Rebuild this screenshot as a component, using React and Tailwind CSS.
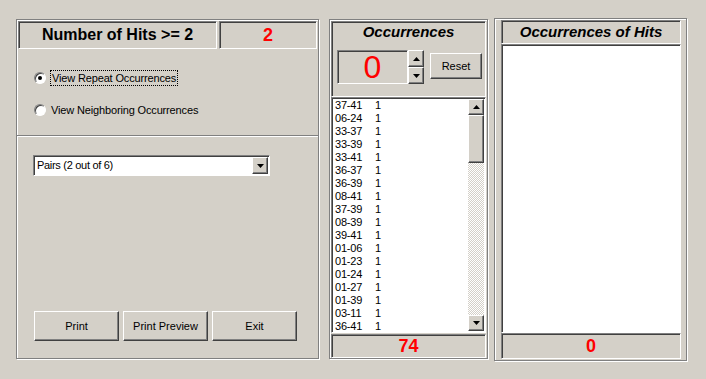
import React from 'react';

const sunken = "border border-t-[#808080] border-l-[#808080] border-r-white border-b-white shadow-[inset_1px_1px_0_#404040]";
const raised = "border border-t-white border-l-white border-r-[#404040] border-b-[#404040] shadow-[inset_-1px_-1px_0_#808080] bg-[#d4d0c8]";
const etched = "border border-[#808080] shadow-[inset_1px_1px_0_#fff,1px_1px_0_#fff]";

const pairs = [
  '37-41', '06-24', '33-37', '33-39', '33-41', '36-37', '36-39', '08-41', '37-39',
  '08-39', '39-41', '01-06', '01-23', '01-24', '01-27', '01-39', '03-11', '36-41',
];

const Arrow = ({ down }) => (
  <svg width="7" height="4" viewBox="0 0 7 4">
    {down ? <polygon points="0,0 7,0 3.5,4" fill="#000" /> : <polygon points="0,4 7,4 3.5,0" fill="#000" />}
  </svg>
);

const Radio = ({ checked }) => (
  <span className="w-[12px] h-[12px] rounded-full bg-white border border-t-[#808080] border-l-[#808080] border-r-white border-b-white shadow-[inset_1px_1px_0_#404040,0_0_0_0.5px_#d4d0c8] flex items-center justify-center">
    {checked && <span className="w-[4px] h-[4px] rounded-full bg-black" />}
  </span>
);

const Button = ({ children, className }) => (
  <div className={`${raised} flex items-center justify-center text-[11px] text-black ${className}`}>{children}</div>
);

export default function App() {
  return (
    <div className="w-[706px] h-[379px] bg-[#d4d0c8] font-['Liberation_Sans',Arial,sans-serif] text-black overflow-hidden">
      <div className="flex items-start pt-[19px] pl-[16px]">
        {/* Left panel */}
        <div className={`${etched} w-[303px] h-[340px] flex flex-col`}>
          <div className="flex gap-[2px] pl-[1px] pt-[1px]">
            <div className={`${sunken} w-[199px] h-[28px] flex items-center justify-center text-[16px] font-bold`}>
              Number of Hits &gt;= 2
            </div>
            <div className={`${sunken} w-[98px] h-[28px] flex items-center justify-center text-[18px] font-bold text-[#ff0000]`}>
              2
            </div>
          </div>

          <div className="h-[86px] flex flex-col pl-[17px] pt-[21px] gap-[16px] text-[11px] tracking-[-0.15px]">
            <div className="flex items-center h-[16px]">
              <Radio checked />
              <span className="ml-[4px] h-[16px] px-[1px] flex items-center border border-dotted border-black">View Repeat Occurrences</span>
            </div>
            <div className="flex items-center h-[16px]">
              <Radio />
              <span className="ml-[5px] flex items-center">View Neighboring Occurrences</span>
            </div>
          </div>

          <div className="h-[2px] border-t border-t-[#808080] border-b border-b-white" />

          <div className="flex-1 flex flex-col pl-[16px] pt-[18px] pb-[17px]">
            <div className={`${sunken} w-[237px] h-[21px] bg-white flex items-center justify-between pl-[3px] pr-[1px]`}>
              <span className="text-[11px] tracking-[-0.3px]">Pairs (2 out of 6)</span>
              <div className={`${raised} w-[16px] h-[17px] flex items-center justify-center`}>
                <Arrow down />
              </div>
            </div>
            <div className="mt-auto flex gap-[4px] pl-[1px]">
              <Button className="w-[85px] h-[30px]">Print</Button>
              <Button className="w-[85px] h-[30px]">Print Preview</Button>
              <Button className="w-[85px] h-[30px]">Exit</Button>
            </div>
          </div>
        </div>

        {/* Middle panel */}
        <div className={`${etched} ml-[10px] w-[159px] h-[340px] flex flex-col px-[1px] pt-[1px]`}>
          <div className={`${sunken} h-[76px] flex flex-col`}>
            <div className="pt-[1px] text-center text-[15px] leading-[18px] font-bold italic">Occurrences</div>
            <div className="flex items-start pl-[5px] mt-[9px]">
              <div className={`${sunken} w-[71px] h-[34px] flex items-center justify-center text-[32px] leading-none text-[#ff0000]`}>
                0
              </div>
              <div className="flex flex-col">
                <div className={`${raised} w-[16px] h-[17px] flex items-center justify-center`}><Arrow /></div>
                <div className={`${raised} w-[16px] h-[17px] flex items-center justify-center`}><Arrow down /></div>
              </div>
              <Button className="ml-[6px] mt-[3px] w-[52px] h-[26px]">Reset</Button>
            </div>
          </div>

          <div className={`${sunken} h-[236px] bg-white flex p-[1px]`}>
            <div className="flex-1 flex flex-col pl-[2px] text-[11px] leading-[13px] tracking-[-0.2px]">
              {pairs.map((p) => (
                <div key={p} className="flex h-[13px]">
                  <span className="w-[40px]">{p}</span>
                  <span>1</span>
                </div>
              ))}
            </div>
            <div className="w-[16px] flex flex-col">
              <div className={`${raised} h-[16px] flex items-center justify-center`}><Arrow /></div>
              <div className={`${raised} h-[48px]`} />
              <div className="flex-1 bg-[repeating-conic-gradient(#fff_0_25%,#d4d0c8_0_50%)] bg-[length:2px_2px]" />
              <div className={`${raised} h-[16px] flex items-center justify-center`}><Arrow down /></div>
            </div>
          </div>

          <div className={`${sunken} mt-[1px] h-[24px] flex items-center justify-center text-[18px] font-bold text-[#ff0000]`}>
            74
          </div>
        </div>

        {/* Right panel */}
        <div className={`${etched} ml-[6px] mt-[-1px] w-[193px] h-[343px] flex flex-col pl-[6px] pr-[5px] pt-[1px]`}>
          <div className={`${sunken} h-[24px] flex items-center justify-center text-[15px] font-bold italic`}>
            Occurrences of Hits
          </div>
          <div className={`${sunken} h-[289px] bg-white`} />
          <div className={`${sunken} h-[26px] flex items-center justify-center text-[18px] font-bold text-[#ff0000]`}>
            0
          </div>
        </div>
      </div>
    </div>
  );
}
